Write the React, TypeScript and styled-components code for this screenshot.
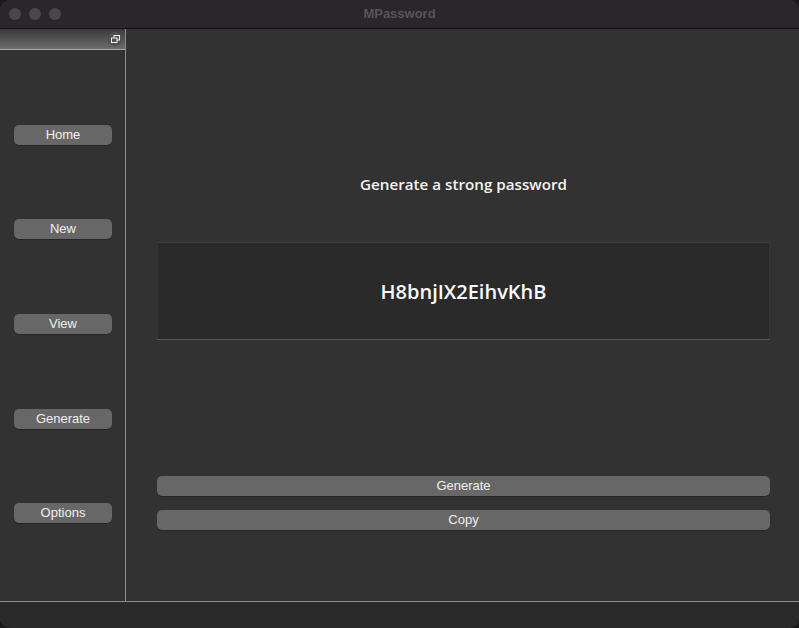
import React from "react";
import styled, { createGlobalStyle } from "styled-components";

const Global = createGlobalStyle`
  html, body { margin: 0; padding: 0; background: #1c191c; }
  body { width: 799px; height: 628px; overflow: hidden; }
  * { box-sizing: border-box; }
`;

const Window = styled.div`
  width: 799px;
  height: 628px;
  display: flex;
  flex-direction: column;
  border-radius: 10px;
  overflow: hidden;
  background: #323232;
  font-family: "Liberation Sans", Arial, sans-serif;
`;

const TitleBar = styled.div`
  height: 29px;
  flex: none;
  background: #2a262a;
  border-bottom: 1px solid #141214;
  display: flex;
  align-items: center;
  position: relative;
  padding-left: 9px;
  gap: 8px;
`;

const Light = styled.span`
  width: 12px;
  height: 12px;
  border-radius: 50%;
  background: #4a464a;
`;

const Title = styled.div`
  position: absolute;
  left: 0;
  right: 0;
  top: 0;
  height: 28px;
  line-height: 28px;
  text-align: center;
  font-size: 13px;
  font-weight: bold;
  color: #58545a;
`;

const Body = styled.div`
  flex: 1;
  display: flex;
  min-height: 0;
`;

const Sidebar = styled.div`
  width: 126px;
  flex: none;
  border-right: 1px solid #8c8c8c;
  display: flex;
  flex-direction: column;
`;

const DockHeader = styled.div`
  height: 21px;
  flex: none;
  background: linear-gradient(#3a3a3a, #6c6c6c);
  border-bottom: 1px solid #a8a8a8;
  display: flex;
  justify-content: flex-end;
  align-items: center;
  padding-right: 3px;
`;

const FloatButton = styled.span`
  width: 14px;
  height: 14px;
  border-radius: 50%;
  background: #505050;
  display: flex;
  align-items: center;
  justify-content: center;
`;

const NavList = styled.div`
  flex: 1;
  display: flex;
  flex-direction: column;
  justify-content: space-evenly;
  padding: 0 13px 3px 14px;
`;

const PillButton = styled.button`
  height: 20px;
  width: 100%;
  border: none;
  border-radius: 5px;
  background: #676767;
  color: #efefef;
  font-family: "Liberation Sans", Arial, sans-serif;
  font-size: 13px;
  padding: 0;
  line-height: 20px;
  box-shadow: 0 1px 0 rgba(0, 0, 0, 0.25);
`;

const Main = styled.div`
  flex: 1;
  display: flex;
  flex-direction: column;
  padding: 0 29px 0 31px;
`;

const Heading = styled.div`
  margin-top: 143px;
  height: 24px;
  line-height: 24px;
  text-align: center;
  font-family: "Open Sans", sans-serif;
  font-weight: 600;
  font-size: 15.2px;
  color: #f4f4f4;
`;

const PasswordBox = styled.div`
  margin-top: 46px;
  height: 98px;
  background: #2a2a2a;
  border: 1px solid #363636;
  border-top-color: #3c3c3c;
  border-bottom-color: #5a5a5a;
  display: flex;
  align-items: center;
  justify-content: center;
  font-family: "Open Sans", sans-serif;
  font-weight: 600;
  font-size: 20px;
  color: #fafafa;
`;

const Actions = styled.div`
  margin-top: 136px;
  display: flex;
  flex-direction: column;
  gap: 14px;
`;

const StatusBar = styled.div`
  height: 27px;
  flex: none;
  background: #2a2a2a;
  border-top: 1px solid #8c8c8c;
`;

export default function App() {
  return (
    <>
      <Global />
      <Window>
        <TitleBar>
          <Light />
          <Light />
          <Light />
          <Title>MPassword</Title>
        </TitleBar>
        <Body>
          <Sidebar>
            <DockHeader>
              <FloatButton>
                <svg width="9" height="8" viewBox="0 0 9 8">
                  <rect x="3" y="0.5" width="5.5" height="4.5" fill="none" stroke="#f0f0f0" strokeWidth="1" />
                  <rect x="0.5" y="3" width="5.5" height="4.5" fill="#505050" stroke="#f0f0f0" strokeWidth="1" />
                </svg>
              </FloatButton>
            </DockHeader>
            <NavList>
              <PillButton>Home</PillButton>
              <PillButton>New</PillButton>
              <PillButton>View</PillButton>
              <PillButton>Generate</PillButton>
              <PillButton>Options</PillButton>
            </NavList>
          </Sidebar>
          <Main>
            <Heading>Generate a strong password</Heading>
            <PasswordBox>H8bnjIX2EihvKhB</PasswordBox>
            <Actions>
              <PillButton>Generate</PillButton>
              <PillButton>Copy</PillButton>
            </Actions>
          </Main>
        </Body>
        <StatusBar />
      </Window>
    </>
  );
}
